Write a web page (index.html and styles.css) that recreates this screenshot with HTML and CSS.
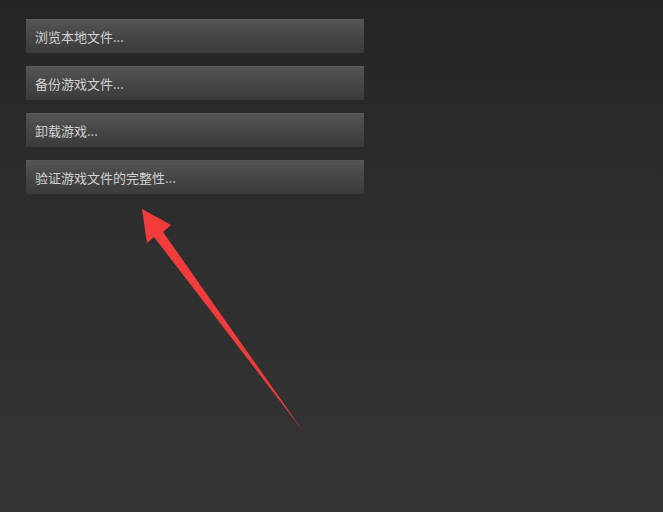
FILE: index.html
```html
<!DOCTYPE html>
<html lang="zh-CN">

<head>
    <meta charset="UTF-8">
    <meta name="viewport" content="width=device-width, initial-scale=1.0">
    <title>属性</title>
    <link rel="stylesheet" href="styles.css">
</head>

<body>
    <div class="menu">
        <button class="item">浏览本地文件...</button>
        <button class="item">备份游戏文件...</button>
        <button class="item">卸载游戏...</button>
        <button class="item">验证游戏文件的完整性...</button>
    </div>

    <!-- 标注箭头 -->
    <svg class="arrow" width="663" height="512" viewBox="0 0 663 512">
        <polygon points="142,209 171,225 163,232 303,431 154,237 147,243" fill="#f23c3c" />
    </svg>
</body>

</html>
```

FILE: styles.css
```css
html,
body {
    height: 100%;
}

body {
    margin: 0;
    background: linear-gradient(to bottom, #252525 0%, #2e2e2e 45%, #343434 100%);
    font-family: "Microsoft YaHei", "Noto Sans CJK SC", sans-serif;
    position: relative;
    overflow: hidden;
}

.menu {
    display: flex;
    flex-direction: column;
    gap: 13px;
    width: 338px;
    padding: 19px 0 0 26px;
}

.item {
    display: block;
    height: 34px;
    padding: 0 9px;
    border: none;
    border-top: 1px solid #5a5a5a;
    background: linear-gradient(to bottom, #545454 0%, #464646 50%, #3b3b3b 100%);
    color: #d2d2d2;
    font-family: inherit;
    font-size: 13px;
    text-align: left;
    cursor: pointer;
}

.arrow {
    position: absolute;
    left: 0;
    top: 0;
    pointer-events: none;
}
```
